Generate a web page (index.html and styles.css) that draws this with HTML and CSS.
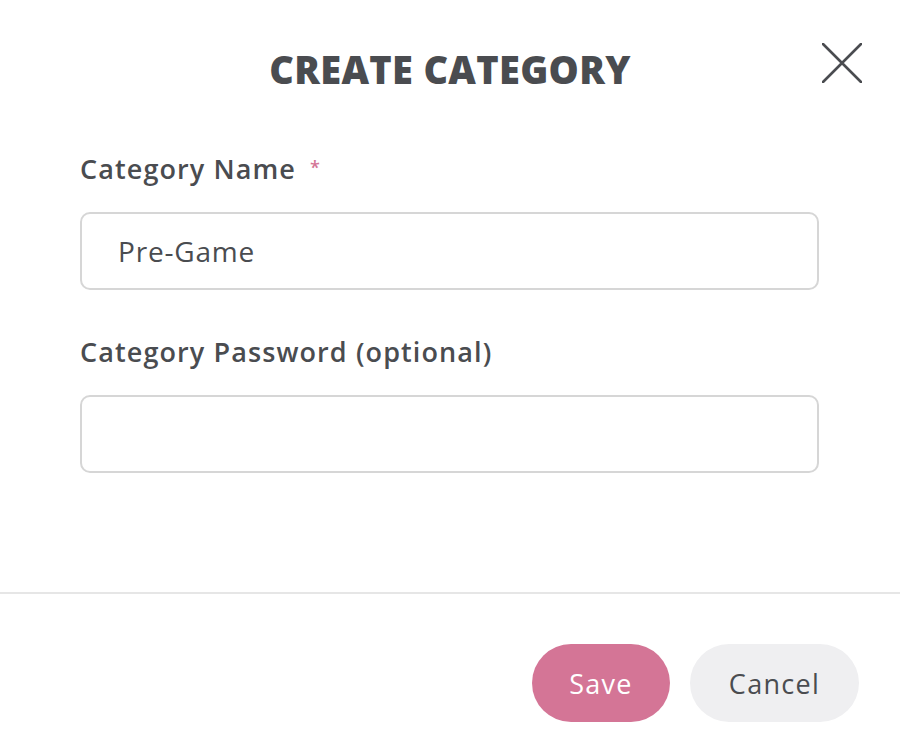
FILE: index.html
```html
<!DOCTYPE html>
<html>
<head>
<meta charset="utf-8">
<link rel="stylesheet" href="styles.css">
</head>
<body>
<div class="modal">
  <div class="header">
    <h1 class="title">CREATE CATEGORY</h1>
    <button class="close" aria-label="Close">
      <svg width="40" height="40" viewBox="0 0 40 40"><path d="M1 1 L39 39 M39 1 L1 39" stroke="#4a4c50" stroke-width="2.6" stroke-linecap="round" fill="none"/></svg>
    </button>
  </div>
  <div class="body">
    <div class="field">
      <label class="label">Category Name <span class="req">*</span></label>
      <div class="input">Pre-Game</div>
    </div>
    <div class="field">
      <label class="label">Category Password (optional)</label>
      <div class="input"></div>
    </div>
  </div>
  <div class="footer">
    <button class="btn btn-save">Save</button>
    <button class="btn btn-cancel">Cancel</button>
  </div>
</div>
</body>
</html>
```
FILE: styles.css
```css
html, body { margin: 0; padding: 0; background: #fff; }
body { font-family: "Open Sans", "DejaVu Sans", sans-serif; color: #4a4c50; }
.modal { width: 900px; height: 748px; display: flex; flex-direction: column; }
.header { position: relative; height: 130px; display: flex; justify-content: center; align-items: flex-start; }
.title { margin: 0; margin-top: 45px; font-size: 38px; font-weight: 800; letter-spacing: 0.3px; line-height: 48px; color: #4a4c50; }
.close { position: absolute; left: 822px; top: 43px; width: 40px; height: 40px; padding: 0; border: 0; background: none; }
.close svg { display: block; }
.body { padding: 22px 81px 0 80px; display: flex; flex-direction: column; gap: 45px; height: 462px; box-sizing: border-box; }
.field { display: flex; flex-direction: column; gap: 26px; }
.label { font-size: 27px; font-weight: 600; line-height: 34px; letter-spacing: 1.1px; color: #4a4c50; }
.req { color: #d47596; font-size: 18px; vertical-align: top; margin-left: 6px; position: relative; top: -2px; }
.input { height: 78px; box-sizing: border-box; border: 2px solid #d6d6d6; border-radius: 10px; padding: 0 36px; font-size: 28px; letter-spacing: 0.8px; line-height: 74px; color: #4a4c50; }
.footer { border-top: 2px solid #e6e6e6; display: flex; justify-content: flex-end; gap: 20px; padding: 50px 41px 0 0; }
.btn { height: 78px; border: 0; border-radius: 39px; font-family: inherit; font-size: 27px; letter-spacing: 1.3px; padding: 0; }
.btn-save { width: 138px; background: #d47596; color: #fff; }
.btn-cancel { width: 169px; background: #efeff1; color: #4a4c50; }
```
